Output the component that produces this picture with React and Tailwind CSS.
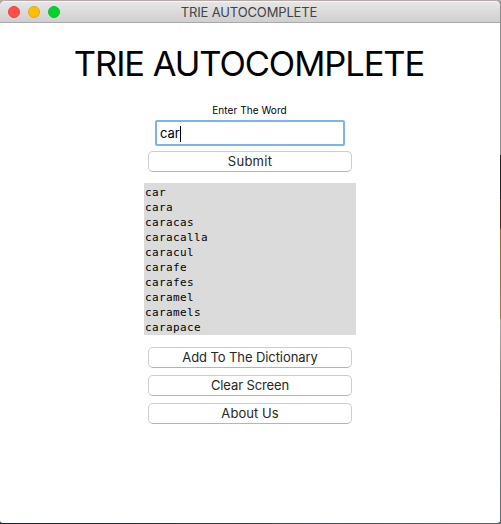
const words = [
  "car", "cara", "caracas", "caracalla", "caracul",
  "carafe", "carafes", "caramel", "caramels", "carapace",
];

function Button({ children, spacing }) {
  return (
    <button
      className={`h-[21px] w-[204px] rounded-[5px] border border-[#cdcdcd] border-b-[#b4b4b4] bg-white text-center text-[13px] leading-[19px] text-[#262626] ${spacing}`}
    >
      {children}
    </button>
  );
}

function TitleBar() {
  return (
    <header className="grid h-[22px] shrink-0 grid-cols-[1fr_auto_1fr] items-center rounded-t-[5px] border-t border-b border-t-[#f6f6f6] border-b-[#a9a9a9] bg-linear-to-b from-[#e6e6e6] to-[#cfcfcf]">
      <div className="flex gap-2 pl-2">
        <span className="size-3 rounded-full border border-[#e9453f] bg-[#ff4e48]" />
        <span className="size-3 rounded-full border border-[#e5a80b] bg-[#ffbf00]" />
        <span className="size-3 rounded-full border border-[#12bd2b] bg-[#00d42c]" />
      </div>
      <span className="pr-[2px] text-[13px] leading-5 tracking-[-0.15px] text-[#434343]">TRIE AUTOCOMPLETE</span>
      <span />
    </header>
  );
}

export default function App() {
  return (
    <div className="h-[524px] w-[501px] bg-linear-to-b from-[#b7a9a7] from-0% via-[#8b8b8b] via-29% to-[#506361] pt-px font-['Inter',sans-serif]">
      <div className="grid h-[522px] w-[501px] grid-cols-[500px_1px]">
        <main className="flex h-[522px] flex-col overflow-hidden rounded-t-[5px] rounded-b-[3px] bg-white">
          <TitleBar />
          <div className="flex flex-col items-center">
            <h1 className="mt-[19px] h-[44px] pr-[2px] text-[34.5px] leading-[44px] whitespace-nowrap tracking-[-1.08px] text-black">
              TRIE AUTOCOMPLETE
            </h1>
            <label className="mt-4 h-4 pr-px text-[10px] leading-4 tracking-[0.07px] text-black">Enter The Word</label>
            <div className="mt-[2px] flex h-[26px] w-[190px] items-center rounded-[2px] border-2 border-[#7ab5f1] bg-white pt-px pl-[3px] text-[13px] text-black">
              <span>car</span>
              <span className="h-4 w-px bg-black" />
            </div>
            <div className="mt-[5px] flex">
              <Button spacing="tracking-[0.25px]">Submit</Button>
            </div>
            <ul className="mt-[11px] h-[152px] w-[212px] bg-[#dbdbdb] pt-[2px] pl-px font-['DejaVu_Sans_Mono',monospace] text-[11px] leading-[15px] tracking-[0.38px] text-black">
              {words.map((word) => (
                <li key={word} className="h-[15px]">{word}</li>
              ))}
            </ul>
            <div className="mt-3 flex flex-col gap-[7px]">
              <Button spacing="tracking-[-0.09px]">Add To The Dictionary</Button>
              <Button spacing="tracking-[-0.12px]">Clear Screen</Button>
              <Button spacing="tracking-[0.05px]">About Us</Button>
            </div>
          </div>
        </main>
        <div className="flex flex-col">
          <span className="h-[154px] bg-[#8d8d8d]" />
          <span className="h-[44px] bg-[#20211f]" />
          <span className="h-[30px] bg-[#572b18]" />
          <span className="h-[90px] bg-linear-to-b from-[#976428] to-[#a17950]" />
          <span className="h-[112px] bg-linear-to-b from-[#b7a59d] to-[#6b6b6c]" />
          <span className="h-[92px] bg-linear-to-b from-[#6c6d6e] to-[#577170]" />
        </div>
      </div>
      <div className="h-px w-[501px] bg-linear-to-r from-[#102329] to-[#566765]" />
    </div>
  );
}
